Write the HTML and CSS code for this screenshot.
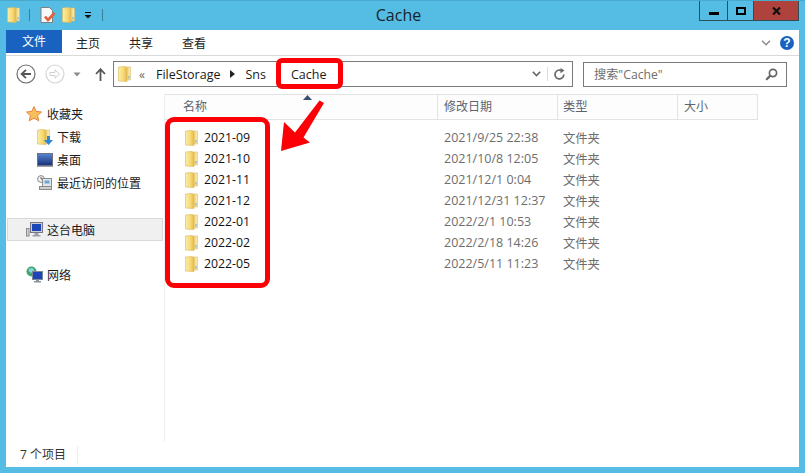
FILE: index.html
```html
<!DOCTYPE html>
<html>
  <head>
    <title>Cache</title>
    <link rel="stylesheet" href="styles.css">
  </head>
  <body>
    <svg class="icon-defs" width="0" height="0">
      <defs>
        <linearGradient id="folder-left" x1="0" y1="0" x2="1" y2="0">
          <stop offset="0" stop-color="#fbeea6"/>
          <stop offset="0.6" stop-color="#f6d873"/>
          <stop offset="1" stop-color="#e5b84c"/>
        </linearGradient>
        <linearGradient id="folder-right" x1="0" y1="0" x2="1" y2="0">
          <stop offset="0" stop-color="#d8a93e"/>
          <stop offset="0.4" stop-color="#f2d77c"/>
          <stop offset="1" stop-color="#f8edc2"/>
        </linearGradient>
        <linearGradient id="screen-blue" x1="0" y1="0" x2="0" y2="1">
          <stop offset="0" stop-color="#5a86d0"/>
          <stop offset="1" stop-color="#16307a"/>
        </linearGradient>
        <symbol id="folder" viewBox="0 0 13 16">
          <path d="M7.5 1 H12.5 V14 H7.5 Z" fill="url(#folder-right)" stroke="#d9bd6e" stroke-width="0.6"/>
          <path d="M.5 1 L7 .4 L9 2 V15.6 L.5 15 Z" fill="url(#folder-left)" stroke="#dcb95c" stroke-width="0.6"/>
          <path d="M11 10 v2.5" stroke="#6db0dc" stroke-width="1"/>
        </symbol>
      </defs>
    </svg>

    <div class="window">
      <!-- Title bar -->
      <div class="titlebar">
        <div class="quick-access">
          <svg class="qa-folder"><use href="#folder"/></svg>
          <span class="qa-sep qa-sep-first"></span>
          <svg class="qa-doc" width="16" height="16" viewBox="0 0 16 16">
            <path d="M1 .5 H9.5 L12.5 3.5 V15.5 H1 Z" fill="#f8f8f8" stroke="#808080"/>
            <path d="M5 9.5 L8 13 L14.5 6" fill="none" stroke="#e2603a" stroke-width="2.6"/>
          </svg>
          <svg class="qa-folder qa-folder-second"><use href="#folder"/></svg>
          <svg class="qa-drop" width="8" height="7" viewBox="0 0 8 7">
            <path d="M1 0.5 H7" stroke="#111"/>
            <path d="M0.5 3 H7.5 L4 6.5 Z" fill="#111"/>
          </svg>
          <span class="qa-sep qa-sep-last"></span>
        </div>
        <div class="title-text">Cache</div>
        <div class="window-controls">
          <div class="ctl ctl-min"><span class="min-glyph"></span></div>
          <div class="ctl ctl-max"><span class="max-glyph"></span></div>
          <div class="ctl ctl-close">
            <svg width="9" height="8" viewBox="0 0 9 8"><path d="M1 0.5 L8 7.5 M8 0.5 L1 7.5" stroke="#111" stroke-width="2.2"/></svg>
          </div>
        </div>
      </div>

      <div class="content">
        <!-- Ribbon tabs -->
        <div class="ribbon">
          <div class="tab-file">文件</div>
          <div class="tab">主页</div>
          <div class="tab">共享</div>
          <div class="tab">查看</div>
          <svg class="ribbon-chevron" width="10" height="6" viewBox="0 0 10 6"><path d="M1 .8 L5 4.8 L9 .8" fill="none" stroke="#8a8a8a" stroke-width="1.5"/></svg>
          <div class="help">?</div>
        </div>

        <!-- Navigation row -->
        <div class="navbar">
          <svg class="nav-back" width="20" height="20" viewBox="0 0 20 20">
            <circle cx="10" cy="10" r="9" fill="#fff" stroke="#6e6e6e" stroke-width="1.2"/>
            <path d="M15 10 H6 M10 5.8 L5.6 10 L10 14.2" fill="none" stroke="#555" stroke-width="1.8"/>
          </svg>
          <svg class="nav-forward" width="20" height="20" viewBox="0 0 20 20">
            <circle cx="10" cy="10" r="9" fill="#fff" stroke="#d6d6d6" stroke-width="1.2"/>
            <path d="M5 8.5 H10 V5.8 L14.6 10 L10 14.2 V11.5 H5 Z" fill="none" stroke="#d0d0d0"/>
          </svg>
          <svg class="nav-drop" width="8" height="5" viewBox="0 0 8 5"><path d="M0.5 0.5 H7.5 L4 4.5 Z" fill="#8a8a8a"/></svg>
          <svg class="nav-up" width="11" height="13" viewBox="0 0 11 13"><path d="M5.5 13 V2 M1 6 L5.5 1.2 L10 6" fill="none" stroke="#555" stroke-width="1.8"/></svg>

          <div class="address">
            <svg class="addr-folder"><use href="#folder"/></svg>
            <span class="addr-more">«</span>
            <span class="crumb">FileStorage</span>
            <span class="crumb-arrow"></span>
            <span class="crumb">Sns</span>
            <span class="crumb-arrow crumb-arrow-hidden"></span>
            <span class="crumb crumb-last">Cache</span>
            <svg class="addr-chevron" width="9" height="6" viewBox="0 0 9 6"><path d="M.8 .8 L4.5 4.6 L8.2 .8" fill="none" stroke="#666" stroke-width="1.6"/></svg>
            <span class="addr-sep"></span>
            <svg class="addr-refresh" width="13" height="13" viewBox="0 0 13 13">
              <path d="M10.8 6.5 A4.4 4.4 0 1 1 8.8 2.8" fill="none" stroke="#6a6a6a" stroke-width="1.7"/>
              <path d="M7.5 0 L11.5 2.6 L7.5 5.2 Z" fill="#6a6a6a"/>
            </svg>
          </div>

          <div class="search">
            <span class="search-text">搜索"Cache"</span>
            <svg width="13" height="13" viewBox="0 0 13 13">
              <circle cx="8" cy="5" r="3.6" fill="none" stroke="#666" stroke-width="1.7"/>
              <path d="M5.4 7.6 L1.2 11.8" stroke="#666" stroke-width="2.2"/>
            </svg>
          </div>
        </div>

        <div class="main">
          <!-- Sidebar -->
          <div class="sidebar">
            <div class="side-group">
              <svg class="side-icon" width="16" height="16" viewBox="0 0 16 16">
                <path d="M8 .6 L10.2 5.4 L15.5 6 L11.6 9.5 L12.7 14.8 L8 12.1 L3.3 14.8 L4.4 9.5 L.5 6 L5.8 5.4 Z" fill="#f7c05a" stroke="#e8803a"/>
              </svg>
              <span>收藏夹</span>
            </div>
            <div class="side-item">
              <span class="side-item-icon">
                <svg class="side-folder"><use href="#folder"/></svg>
                <svg class="side-down" width="9" height="9" viewBox="0 0 9 9"><path d="M3 0 H6 V4 H9 L4.5 9 L0 4 H3 Z" fill="#2f86d6"/></svg>
              </span>
              <span>下载</span>
            </div>
            <div class="side-item">
              <svg class="side-icon" width="16" height="14" viewBox="0 0 16 14">
                <rect x=".5" y=".5" width="15" height="12" fill="url(#screen-blue)" stroke="#6b7280"/>
                <path d="M0 13.5 H16" stroke="#9aa0a8"/>
              </svg>
              <span>桌面</span>
            </div>
            <div class="side-item">
              <svg class="side-icon" width="16" height="16" viewBox="0 0 16 16">
                <circle cx="4" cy="4" r="3.4" fill="#f2f2f2" stroke="#8b8b8b"/>
                <path d="M4 2 V4 H6" fill="none" stroke="#666"/>
                <rect x="5.5" y="3.5" width="9" height="8" fill="#dfe7ee" stroke="#8b8b8b"/>
                <rect x="7.5" y="5.5" width="5" height="3" fill="#6fa5d0"/>
                <rect x="2.5" y="11.5" width="12" height="3" fill="#cfcfcf" stroke="#8b8b8b"/>
              </svg>
              <span>最近访问的位置</span>
            </div>
            <div class="side-computer">
              <svg class="side-icon" width="17" height="16" viewBox="0 0 17 16">
                <rect x=".5" y="6.5" width="2.5" height="7.5" fill="#d8d8d8" stroke="#888"/>
                <rect x="4.5" y=".5" width="12" height="10" fill="#c9ced6" stroke="#778"/>
                <rect x="6" y="2" width="9" height="7" fill="#1c45b8"/>
                <path d="M8.5 11 V13 H6.5 V14.5 H14.5 V13 H12.5 V11 Z" fill="#9aa0a8"/>
              </svg>
              <span>这台电脑</span>
            </div>
            <div class="side-network">
              <svg class="side-icon" width="17" height="17" viewBox="0 0 17 17">
                <circle cx="5.5" cy="5.5" r="5" fill="#3fa66a"/>
                <path d="M3 2.5 L7 2 L8 5 L5 7 L2.5 5 Z" fill="#8cd0e8"/>
                <rect x="6.5" y="5.5" width="10" height="8" fill="#1c45b8" stroke="#7d8794"/>
                <path d="M10 13.5 V15 H8 V16.5 H15 V15 H13 V13.5 Z" fill="#8a929c"/>
              </svg>
              <span>网络</span>
            </div>
          </div>

          <!-- File list -->
          <div class="files">
            <div class="file-head">
              <div class="col-name head-cell">名称</div>
              <div class="col-date head-cell">修改日期</div>
              <div class="col-type head-cell">类型</div>
              <div class="col-size head-cell">大小</div>
            </div>
            <div class="file-rows">
              <div class="file-row">
                <div class="col-name name-cell"><svg class="row-folder"><use href="#folder"/></svg>2021-09</div>
                <div class="col-date date-cell">2021/9/25 22:38</div>
                <div class="col-type">文件夹</div>
              </div>
              <div class="file-row">
                <div class="col-name name-cell"><svg class="row-folder"><use href="#folder"/></svg>2021-10</div>
                <div class="col-date date-cell">2021/10/8 12:05</div>
                <div class="col-type">文件夹</div>
              </div>
              <div class="file-row">
                <div class="col-name name-cell"><svg class="row-folder"><use href="#folder"/></svg>2021-11</div>
                <div class="col-date date-cell">2021/12/1 0:04</div>
                <div class="col-type">文件夹</div>
              </div>
              <div class="file-row">
                <div class="col-name name-cell"><svg class="row-folder"><use href="#folder"/></svg>2021-12</div>
                <div class="col-date date-cell">2021/12/31 12:37</div>
                <div class="col-type">文件夹</div>
              </div>
              <div class="file-row">
                <div class="col-name name-cell"><svg class="row-folder"><use href="#folder"/></svg>2022-01</div>
                <div class="col-date date-cell">2022/2/1 10:53</div>
                <div class="col-type">文件夹</div>
              </div>
              <div class="file-row">
                <div class="col-name name-cell"><svg class="row-folder"><use href="#folder"/></svg>2022-02</div>
                <div class="col-date date-cell">2022/2/18 14:26</div>
                <div class="col-type">文件夹</div>
              </div>
              <div class="file-row">
                <div class="col-name name-cell"><svg class="row-folder"><use href="#folder"/></svg>2022-05</div>
                <div class="col-date date-cell">2022/5/11 11:23</div>
                <div class="col-type">文件夹</div>
              </div>
            </div>
          </div>
        </div>

        <!-- Status bar -->
        <div class="statusbar"><span class="status-text">7 个项目</span></div>
      </div>
    </div>

    <!-- Red annotations on top of the screenshot -->
    <svg class="sort-arrow" width="9" height="5" viewBox="0 0 9 5"><path d="M0 5 L4.5 0 L9 5 Z" fill="#3d4f6e"/></svg>
    <div class="mark mark-cache"></div>
    <div class="mark mark-folders"></div>
    <svg class="mark-arrow" width="805" height="473" viewBox="0 0 805 473">
      <path d="M319.5 100.5 L324 103 L303.5 137.5 L310 142.5 L281 151 L284 122 L295 132.5 Z" fill="#fb0006"/>
    </svg>
  </body>
</html>
```

FILE: styles.css
```css
html, body {
  margin: 0;
  height: 100%;
  overflow: hidden;
}

body {
  position: relative;
  font-family: "Open Sans", "Noto Sans CJK SC", sans-serif;
  font-size: 12px;
  color: #1a1a1a;
}

.icon-defs {
  position: absolute;
}

/* Window frame */
.window {
  display: flex;
  flex-direction: column;
  box-sizing: border-box;
  width: 805px;
  height: 473px;
  padding: 0 6px 6px;
  background-color: #55bde3;
  border-top: 1px solid #49a9cc;
}

.titlebar {
  display: flex;
  flex: 0 0 29px;
  align-items: flex-start;
  margin: 0 0 0 1px;
}

.quick-access {
  display: flex;
  align-items: center;
  width: 150px;
  height: 28px;
}

.qa-folder {
  width: 13px;
  height: 16px;
}

.qa-sep {
  width: 1px;
  height: 12px;
  background-color: #3a7f9b;
}

.qa-sep-first {
  margin: 0 10px 0 9px;
}

.qa-folder-second {
  margin-left: 6px;
}

.qa-drop {
  margin-left: 9px;
}

.qa-sep-last {
  margin-left: 10px;
}

.title-text {
  flex: 1;
  padding: 3px 59px 0 0;
  font-size: 16px;
  line-height: 22px;
  text-align: center;
  color: #15242c;
}

.window-controls {
  display: flex;
  height: 20px;
  border: 1px solid #2f4c58;
  border-top: none;
  box-sizing: border-box;
  width: 100px;
}

.ctl {
  display: flex;
  align-items: center;
  justify-content: center;
  box-sizing: border-box;
  border-right: 1px solid #2f4c58;
}

.ctl-min {
  width: 28px;
}

.ctl-max {
  width: 26px;
}

.ctl-close {
  flex: 1;
  background-color: #b0423e;
  border-right: none;
}

.min-glyph {
  width: 10px;
  height: 3px;
  margin-top: 5px;
  background-color: #000;
}

.max-glyph {
  box-sizing: border-box;
  width: 10px;
  height: 8px;
  border: 2px solid #000;
}

.content {
  display: flex;
  flex: 1;
  flex-direction: column;
  min-height: 0;
  background-color: #fff;
}

/* Ribbon */
.ribbon {
  display: flex;
  flex: 0 0 26px;
  box-sizing: border-box;
  align-items: center;
  border-bottom: 1px solid #dadada;
}

.tab-file {
  align-self: flex-start;
  width: 56px;
  height: 23px;
  margin-right: 14px;
  line-height: 23px;
  text-align: center;
  color: #fff;
  background-color: #1a62bf;
}

.tab {
  width: 24px;
  margin-right: 29px;
  color: #222;
}

.ribbon-chevron {
  margin-left: auto;
}

.help {
  width: 14px;
  height: 14px;
  margin: 0 5px 0 9px;
  border-radius: 50%;
  font-family: "Liberation Sans", sans-serif;
  font-size: 12px;
  font-weight: bold;
  line-height: 14px;
  text-align: center;
  color: #fff;
  background-color: #1a62bf;
}

/* Navigation row */
.navbar {
  display: flex;
  flex: 0 0 38px;
  box-sizing: border-box;
  align-items: center;
  padding: 0 12px 2px 10px;
}

.nav-forward {
  margin-left: 9px;
}

.nav-drop {
  margin-left: 8px;
}

.nav-up {
  margin-left: 14px;
}

.address {
  display: flex;
  box-sizing: border-box;
  align-items: center;
  width: 460px;
  height: 26px;
  margin-left: 7px;
  padding: 0 6px 0 4px;
  border: 1px solid #7a7a7a;
  background-color: #fff;
}

.addr-folder {
  width: 13px;
  height: 16px;
}

.addr-more {
  width: 25px;
  padding-left: 8px;
  box-sizing: border-box;
  color: #666;
}

.crumb {
  font-size: 12.5px;
  color: #1a1a1a;
}

.crumb-arrow {
  width: 0;
  height: 0;
  margin: 0 10px;
  border-left: 5px solid #222;
  border-top: 4px solid transparent;
  border-bottom: 4px solid transparent;
}

.crumb-arrow-hidden {
  visibility: hidden;
}

.addr-chevron {
  margin-left: auto;
}

.addr-sep {
  width: 1px;
  height: 14px;
  margin: 0 4px 0 6px;
  background-color: #dcdcdc;
}

.addr-refresh {
  margin-left: 1px;
}

.search {
  display: flex;
  box-sizing: border-box;
  align-items: center;
  justify-content: space-between;
  width: 204px;
  height: 25px;
  margin-left: 10px;
  padding: 0 8px 0 10px;
  border: 1px solid #7a7a7a;
  background-color: #fff;
}

.search-text {
  font-size: 12.2px;
  color: #6d6d6d;
}

/* Main area */
.main {
  display: flex;
  flex: 1;
  min-height: 0;
}

.sidebar {
  box-sizing: border-box;
  width: 159px;
  height: 348px;
  padding: 0 1px;
  border-right: 1px solid #efefef;
}

.side-group,
.side-network,
.side-item,
.side-computer {
  display: flex;
  align-items: center;
  height: 23px;
}

.side-group {
  margin-top: 8px;
  padding-left: 19px;
}

.side-group .side-icon {
  margin-right: 5px;
}

.side-item {
  padding-left: 30px;
}

.side-item .side-icon,
.side-item-icon {
  margin-right: 4px;
}

.side-item-icon {
  position: relative;
  width: 16px;
  height: 16px;
}

.side-folder {
  width: 13px;
  height: 16px;
}

.side-down {
  position: absolute;
  right: 0;
  bottom: 0;
}

.side-computer {
  box-sizing: border-box;
  margin-top: 24px;
  padding-left: 18px;
  background-color: #f0f0f0;
  border: 1px solid #d9d9d9;
}

.side-computer .side-icon,
.side-network .side-icon {
  margin-right: 4px;
}

.side-network {
  margin-top: 22px;
  padding-left: 19px;
}

/* File list */
.files {
  flex: 1;
}

.file-head {
  display: flex;
  box-sizing: border-box;
  width: 593px;
  height: 26px;
  border-top: 1px solid #e3e3e3;
  border-bottom: 1px solid #e3e3e3;
  background-color: #fdfdfd;
}

.head-cell {
  line-height: 24px;
  color: #5c6470;
  border-right: 1px solid #e3e3e3;
}

.col-name,
.col-date,
.col-type,
.col-size {
  box-sizing: border-box;
}

.col-name {
  width: 273px;
  padding-left: 18px;
}

.col-date {
  width: 120px;
  padding-left: 6px;
}

.col-type {
  width: 120px;
  padding-left: 5px;
  font-size: 12.3px;
}

.col-size {
  width: 80px;
  padding-left: 6px;
}

.file-rows {
  padding-top: 7px;
}

.file-row {
  display: flex;
  align-items: center;
  height: 21px;
  color: #6d6d6d;
}

.name-cell {
  display: flex;
  align-items: center;
  padding-left: 20px;
  font-size: 12.3px;
  color: #111;
}

.date-cell {
  font-size: 12.5px;
}

.row-folder {
  width: 13px;
  height: 16px;
  margin-right: 6px;
}

/* Status bar */
.statusbar {
  flex: 0 0 24px;
  padding-left: 14px;
  line-height: 24px;
  color: #333;
}

.status-text {
  display: inline-block;
  height: 18px;
  padding-right: 11px;
  line-height: 18px;
  border-right: 1px solid #eeeeee;
}

/* Annotations over the window */
.sort-arrow {
  position: absolute;
  left: 303px;
  top: 95px;
}

.mark {
  position: absolute;
  box-sizing: border-box;
  border: 5px solid #fb0006;
}

.mark-cache {
  left: 276px;
  top: 58px;
  width: 67px;
  height: 31px;
  border-radius: 6px;
}

.mark-folders {
  left: 165px;
  top: 117px;
  width: 105px;
  height: 171px;
  border-radius: 9px;
}

.mark-arrow {
  position: absolute;
  left: 0;
  top: 0;
}
```
